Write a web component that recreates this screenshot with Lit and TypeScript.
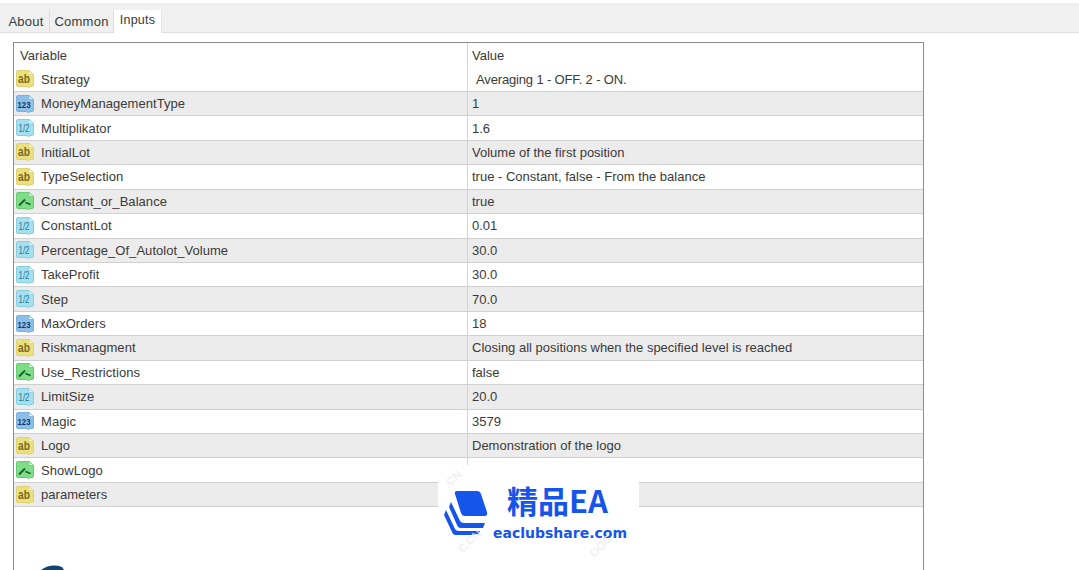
import { LitElement, html, css, svg } from 'lit';
import { customElement } from 'lit/decorators.js';

type Kind = 'str' | 'int' | 'dbl' | 'bool';

const ROWS: [Kind, string, string][] = [
    ['str', 'Strategy', 'Averaging 1 - OFF. 2 - ON.'],
    ['int', 'MoneyManagementType', '1'],
    ['dbl', 'Multiplikator', '1.6'],
    ['str', 'InitialLot', 'Volume of the first position'],
    ['str', 'TypeSelection', 'true - Constant, false - From the balance'],
    ['bool', 'Constant_or_Balance', 'true'],
    ['dbl', 'ConstantLot', '0.01'],
    ['dbl', 'Percentage_Of_Autolot_Volume', '30.0'],
    ['dbl', 'TakeProfit', '30.0'],
    ['dbl', 'Step', '70.0'],
    ['int', 'MaxOrders', '18'],
    ['str', 'Riskmanagment', 'Closing all positions when the specified level is reached'],
    ['bool', 'Use_Restrictions', 'false'],
    ['dbl', 'LimitSize', '20.0'],
    ['int', 'Magic', '3579'],
    ['str', 'Logo', 'Demonstration of the logo'],
    ['bool', 'ShowLogo', ''],
    ['str', 'parameters', ''],
];

const COLORS: Record<Kind, { fill: string; edge: string; ink: string }> = {
    str: { fill: '#ebe07e', edge: '#e0d272', ink: '#7a6a20' },
    int: { fill: '#8cc0e6', edge: '#7ab0da', ink: '#0f3a72' },
    dbl: { fill: '#a5e0ee', edge: '#86cee2', ink: '#2a7494' },
    bool: { fill: '#7edd86', edge: '#66cc70', ink: '#12602a' },
};

function typeIcon(kind: Kind) {
    const c = COLORS[kind];
    const label = kind === 'str' ? 'ab' : kind === 'int' ? '123' : '1/2';
    const size = kind === 'str' ? 12 : kind === 'int' ? 8.5 : 10;
    return html`<svg class="ico" viewBox="0 0 20 20" width="20" height="20">
        <path d="M3 1.500h11l4.500 4v10.500q0 1.500-1.500 1.500h-2l-1.500 1.500-1.500-1.500H3q-1.500 0-1.500-1.500V3q0-1.500 1.500-1.500z" fill=${c.fill} stroke=${c.edge} stroke-width="1"/>
        <path d="M14 1.500v4h4.500z" fill="#f4f8f8" stroke=${c.edge} stroke-width="0.7"/>
        ${kind === 'bool'
            ? svg`<path d="M4 14.500l6-6M10.500 11.500l5 2" fill="none" stroke=${c.ink} stroke-width="1.800"/>`
            : svg`<text x="9" y="14" text-anchor="middle" font-family="Liberation Sans, sans-serif" font-weight=${kind === 'dbl' ? 400 : 700} font-size=${size} textLength=${kind === 'dbl' ? 11 : kind === 'int' ? 13 : 12} lengthAdjust="spacingAndGlyphs" fill=${c.ink}>${label}</text>`}
    </svg>`;
}

@customElement('app-root')
export class AppRoot extends LitElement {
    static styles = css`
        :host {
            display: block;
            position: relative;
            width: 1079px;
            height: 570px;
            overflow: hidden;
            background: #fff;
            font-family: 'Liberation Sans', Arial, sans-serif;
            font-size: 13px;
            color: #3a3a3a;
        }
        .tabbar {
            display: flex;
            align-items: flex-end;
            height: 30px;
            margin-top: 3px;
            padding-left: 3px;
            background: #f0f0f0;
            border-bottom: 1px solid #dfdfdf;
            box-sizing: border-box;
        }
        .tab {
            display: flex;
            align-items: center;
            justify-content: center;
            height: 21px;
            border-right: 1px solid #dcdcdc;
            box-sizing: border-box;
            letter-spacing: 0.25px;
        }
        .tab.about { width: 47px; }
        .tab.common { width: 64px; }
        .tab.inputs {
            width: 48px;
            height: 23px;
            margin-bottom: -1px;
            padding-bottom: 4px;
            background: #fff;
            border-right: 1px solid #e4e4e4;
            font-size: 12.5px;
        }
        .body { padding: 9px 0 0 13px; }
        .table {
            width: 911px;
            height: 560px;
            border: 1px solid #8c8c8c;
            box-sizing: border-box;
        }
        .row {
            display: grid;
            grid-template-columns: 453px 1fr;
            height: 24.45px;
            box-sizing: border-box;
            border-bottom: 1px solid #d0d0d0;
        }
        .row.head { border-bottom: 0; }
        .row.alt { background: #ececec; }
        .cell {
            display: flex;
            align-items: center;
            gap: 6px;
            min-width: 0;
            white-space: nowrap;
        }
        .name { padding-left: 1px; letter-spacing: 0.05px; }
        .head .name { padding-left: 6px; }
        .value { padding-left: 4px; border-left: 1px solid #d4d4d4; }
        .value.first { padding-left: 8px; letter-spacing: -0.15px; }
        .ico { flex: none; }
        .brand {
            position: absolute;
            left: 438px;
            top: 465px;
            width: 201px;
            height: 105px;
            background: #fff;
            color: #1655ea;
        }
        .brand-mark { position: absolute; left: 6px; top: 24px; }
        .brand-title {
            position: absolute;
            left: 69px;
            top: 12px;
            font-family: 'Noto Sans CJK SC', sans-serif;
            font-size: 31px;
            line-height: 46px;
            font-weight: 700;
            white-space: nowrap;
        }
        .brand-url {
            position: absolute;
            left: 55px;
            top: 58px;
            font-family: 'DejaVu Sans', sans-serif;
            font-size: 14px;
            line-height: 20px;
            font-weight: 700;
            white-space: nowrap;
        }
        .mark {
            position: absolute;
            font-size: 11px;
            color: #ececec;
            transform: rotate(-45deg);
        }
        .peek { position: absolute; left: 38px; top: 565px; }
    `;

    render () {
        return html`
            <div class="tabbar">
                <div class="tab about">About</div>
                <div class="tab common">Common</div>
                <div class="tab inputs">Inputs</div>
            </div>
            <div class="body">
                <div class="table">
                    <div class="row head">
                        <div class="cell name">Variable</div>
                        <div class="cell value">Value</div>
                    </div>
                    ${ROWS.map(([kind, name, value], i) => html`
                        <div class="row ${i % 2 ? 'alt' : ''}">
                            <div class="cell name">${typeIcon(kind)}<span>${name}</span></div>
                            <div class="cell value ${i === 0 ? 'first' : ''}">${value}</div>
                        </div>
                    `)}
                </div>
            </div>
            <svg class="peek" width="40" height="5" viewBox="0 0 40 5">
                <path d="M3 5q10-7 21-3l2 3z" fill="#12456e"/>
            </svg>
            <div class="brand">
                <svg class="brand-mark" width="44" height="46" viewBox="0 0 44 46">
                    <path d="M13 2h20q3 0 4 3l6 18q1 4-3 4H21q-3 0-4-3L11 5q-1-3 2-3z" fill="#1655ea"/>
                    <path d="M7 13l9 19q1 2 4 2h21l-2 5H17q-3 0-4-3L5 18z" fill="#1655ea"/>
                    <path d="M2 21l9 19q1 2 4 2h21l-2 4H12q-3 0-4-3L0 26z" fill="#1655ea"/>
                </svg>
                <div class="brand-title">精品EA</div>
                <div class="brand-url">eaclubshare.com</div>
                <span class="mark" style="left:5px;top:8px">.CN</span>
                <span class="mark" style="left:18px;top:70px">C.CN</span>
                <span class="mark" style="left:150px;top:75px">OOC</span>
            </div>
        `;
    }
}
